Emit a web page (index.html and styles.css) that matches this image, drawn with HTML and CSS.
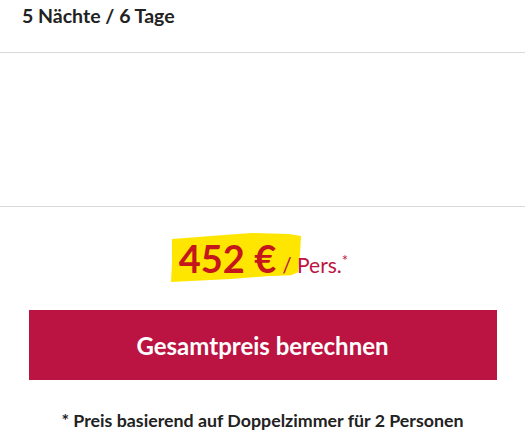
FILE: index.html
```html
<!DOCTYPE html>
<html lang="de">
<head>
<meta charset="utf-8">
<link rel="stylesheet" href="styles.css">
</head>
<body>
<div class="card">
  <div class="head">5 Nächte / 6 Tage</div>
  <div class="empty"></div>
  <div class="price-area">
    <div class="price-line">
      <span class="price">
        <svg class="marker" viewBox="0 0 130 52" preserveAspectRatio="none"><path d="M1 6 L40 3 L80 0 L118 1 L130 3 L129 22 L127 40 L120 43 L95 44 L60 47 L20 49 L0 50 L1 30 Z" fill="#ffe600"/></svg>
        <span class="amount">452 €</span>
      </span>
      <span class="per">/ Pers.<sup>*</sup></span>
    </div>
    <button class="cta">Gesamtpreis berechnen</button>
    <p class="note">* Preis basierend auf Doppelzimmer für 2 Personen</p>
  </div>
</div>
</body>
</html>
```
FILE: styles.css
```css
html, body {
  margin: 0;
  padding: 0;
  background: #fff;
}
body {
  font-family: Lato, "Open Sans", sans-serif;
  color: #222;
}
.card {
  width: 525px;
}
.head {
  height: 53px;
  box-sizing: border-box;
  padding: 3px 0 0 22px;
  font-weight: 700;
  font-size: 19.5px;
  line-height: 26px;
  border-bottom: 1px solid #d9d9d9;
}
.empty {
  height: 153px;
  border-bottom: 1px solid #d9d9d9;
}
.price-area {
  display: flex;
  flex-direction: column;
  align-items: center;
}
.price-line {
  margin-top: 27px;
  display: flex;
  align-items: baseline;
  gap: 6px;
  padding-right: 6px;
}
.price {
  position: relative;
  padding: 0 0 0 8px;
}
.marker {
  position: absolute;
  left: 0;
  top: -1px;
  width: 130px;
  height: 51px;
  z-index: 0;
}
.amount {
  position: relative;
  font-size: 38px;
  font-weight: 700;
  line-height: 48px;
  color: #c4161c;
}
.per {
  font-size: 21px;
  color: #bc1442;
  position: relative;
}
.per sup {
  font-size: 15px;
  vertical-align: 7px;
  line-height: 0;
}
.cta {
  margin-top: 28px;
  width: 468px;
  height: 70px;
  border: 0;
  background: #bc1442;
  color: #fff;
  font-family: inherit;
  font-weight: 700;
  font-size: 24px;
  cursor: pointer;
}
.note {
  margin: 29px 0 0;
  font-weight: 700;
  font-size: 17.8px;
  color: #222;
}
```
